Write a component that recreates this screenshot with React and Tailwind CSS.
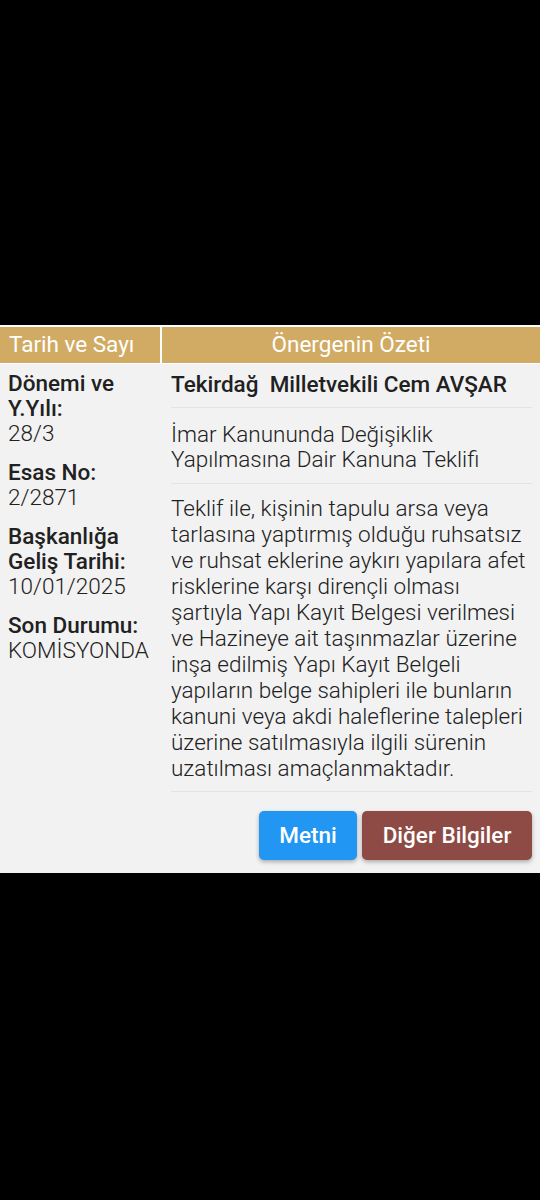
import React from 'react';

const fields = [
  { label: ['Dönemi ve', 'Y.Yılı:'], value: '28/3' },
  { label: ['Esas No:'], value: '2/2871' },
  { label: ['Başkanlığa', 'Geliş Tarihi:'], value: '10/01/2025' },
  { label: ['Son Durumu:'], value: 'KOMİSYONDA' },
];

const App = () => {
  return (
    <div className="min-h-[1200px] bg-black font-['Roboto',sans-serif] text-[#212121]">
      <div className="h-[325px]" />

      <div className="bg-[#f2f2f2] border-t-2 border-white">
        {/* header */}
        <div className="flex h-[37px] bg-[#d1ab63] text-white text-[22.5px] border-b border-white">
          <div className="w-[162px] flex items-center pl-[9px] border-r-2 border-white">
            Tarih ve Sayı
          </div>
          <div className="flex-1 flex items-center justify-center">Önergenin Özeti</div>
        </div>

        <div className="flex">
          {/* left column */}
          <div className="w-[162px] pl-[8px] pt-[7px] flex flex-col gap-[14px]">
            {fields.map((f) => (
              <div key={f.value} className="text-[22.5px] leading-[25px]">
                {f.label.map((l) => (
                  <div key={l} className="font-medium">{l}</div>
                ))}
                <div className="font-light">{f.value}</div>
              </div>
            ))}
          </div>

          {/* right column */}
          <div className="flex-1 pl-[9px] pr-[8px] text-[22.5px]">
            <div className="pt-[8px] pb-[10px] leading-[25px] font-medium whitespace-pre border-b border-[#e4e4e4]">
              Tekirdağ  Milletvekili Cem AVŞAR
            </div>
            <div className="pt-[14px] pb-[11px] leading-[25px] font-light border-b border-[#e4e4e4]">
              İmar Kanununda Değişiklik Yapılmasına Dair Kanuna Teklifi
            </div>
            <div className="pt-[11px] pb-[10px] leading-[26px] font-light border-b border-[#e4e4e4]">
              Teklif ile, kişinin tapulu arsa veya tarlasına yaptırmış olduğu ruhsatsız ve ruhsat eklerine
              aykırı yapılara afet risklerine karşı dirençli olması şartıyla Yapı Kayıt Belgesi verilmesi
              ve Hazineye ait taşınmazlar üzerine inşa edilmiş Yapı Kayıt Belgeli yapıların belge sahipleri
              ile bunların kanuni veya akdi haleflerine talepleri üzerine satılmasıyla ilgili sürenin
              uzatılması amaçlanmaktadır.
            </div>
            <div className="flex justify-end gap-[5px] pt-[19px] pb-[13px]">
              <button className="h-[49px] w-[98px] rounded-[5px] bg-[#2196f3] text-white font-medium text-[22.5px] shadow-[0_2px_4px_rgba(0,0,0,0.3)]">
                Metni
              </button>
              <button className="h-[49px] w-[170px] rounded-[5px] bg-[#8e4a44] text-white font-medium text-[22.5px] shadow-[0_2px_4px_rgba(0,0,0,0.3)]">
                Diğer Bilgiler
              </button>
            </div>
          </div>
        </div>
      </div>
    </div>
  );
};

export default App;
